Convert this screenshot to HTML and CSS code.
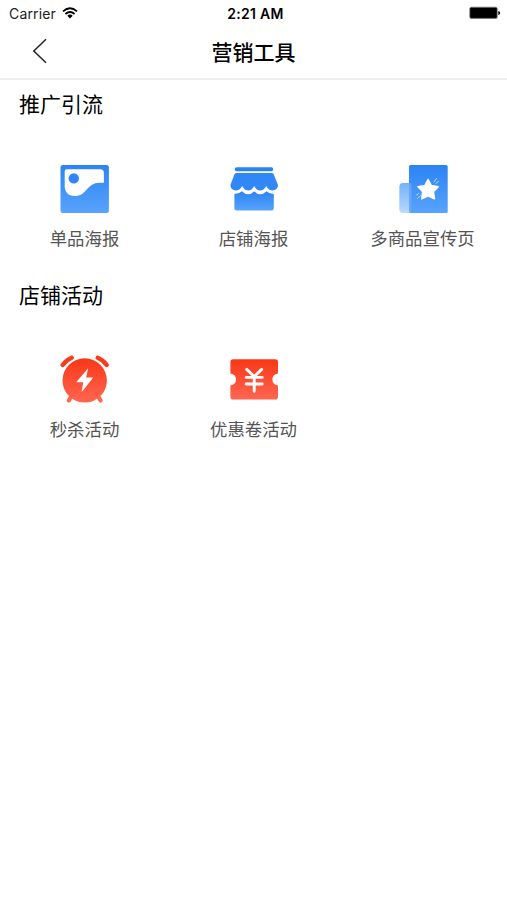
FILE: index.html
```
<!DOCTYPE html>
<html lang="zh-CN">
<head>
    <meta charset="UTF-8">
    <title>营销工具</title>
    <link rel="stylesheet" href="styles.css">
</head>
<body>

    <div class="status-bar">
        <div class="carrier">
            <span>Carrier</span>
            <svg class="wifi" width="16" height="12" viewBox="0 0 16 12">
                <g fill="none" stroke="#000" stroke-width="1.7">
                    <path d="M1 4.3Q8 -1.8 15 4.3"/>
                    <path d="M3.4 7Q8 3 12.6 7"/>
                </g>
                <path d="M5.3 8.7Q8 6.5 10.7 8.7L8 11.5Z"/>
            </svg>
        </div>
        <span class="time">2:21 AM</span>
        <svg class="battery" width="32" height="14" viewBox="0 0 32 14">
            <rect x="0.8" y="1.2" width="27.4" height="11.2" rx="1.5" fill="#000" stroke="#777" stroke-width="0.8"/>
            <path d="M29.3 5Q31.2 5.6 31.2 7T29.3 9Z"/>
        </svg>
    </div>

    <div class="nav-bar">
        <svg class="back" width="16" height="26" viewBox="0 0 16 26">
            <path d="M14 1.2L1.8 13L14 24.8" fill="none" stroke="#222" stroke-width="1.5"/>
        </svg>
        <h1>营销工具</h1>
    </div>

    <div class="section">
        <h2>推广引流</h2>
        <div class="grid">
            <div class="item">
                <svg width="50" height="50" viewBox="0.8 0 50 50">
                    <defs>
                        <linearGradient id="blue" x1="0" y1="0" x2="0" y2="1">
                            <stop offset="0" stop-color="#2b83f3"/>
                            <stop offset="1" stop-color="#58a3fc"/>
                        </linearGradient>
                    </defs>
                    <rect x="1.3" y="1" width="48.4" height="48" rx="2.5" fill="url(#blue)"/>
                    <path d="M7.5 5.3H41Q44.7 5.3 44.7 9V18.7C36 18.5 33 19.5 28.5 24.5C24 29.7 21 32 15.5 32C9 32 5.5 28 5.5 22V7.3Q5.5 5.3 7.5 5.3Z" fill="#fff"/>
                    <circle cx="14.6" cy="14.4" r="5.2" fill="#3087f4"/>
                </svg>
                <p>单品海报</p>
            </div>
            <div class="item">
                <svg width="50" height="50" viewBox="0.8 0 50 50">
                    <rect x="6.6" y="3.3" width="38.4" height="4" rx="1.8" fill="#2b83f3"/>
                    <path d="M8.5 9H43.3Q44.8 9 45.5 10.3L49.7 20.8C50 24.5 47 26.5 44.5 26.5Q40.5 26.5 38 22Q35.5 26.5 32 26.5Q28.5 26.5 26 22Q23.5 26.5 20 26.5Q16.5 26.5 14 22Q11.5 26.5 7.5 26.5C5 26.5 2 24.5 2.3 20.8L6.3 10.3Q7 9 8.5 9Z" fill="#3187f5"/>
                    <path d="M6.2 30Q10.8 30 13.8 27.3Q16.5 30.3 20 30.3Q23.5 30.3 26 27.3Q28.5 30.3 32 30.3Q35.5 30.3 38.2 27.3Q41 30 45.6 30V44.3Q45.6 46.5 43.4 46.5H8.4Q6.2 46.5 6.2 44.3Z" fill="url(#blue)"/>
                </svg>
                <p>店铺海报</p>
            </div>
            <div class="item">
                <svg width="50" height="50" viewBox="0.5 0 50 50">
                    <defs>
                        <linearGradient id="page" x1="0" y1="0" x2="0" y2="1">
                            <stop offset="0" stop-color="#75b1fa"/>
                            <stop offset="1" stop-color="#b8daff"/>
                        </linearGradient>
                    </defs>
                    <rect x="11.5" y="1" width="38.7" height="48" rx="1.5" fill="url(#blue)"/>
                    <path d="M5.5 19H11.5V49H5.5Q1.8 49 1.8 45V23Q1.8 19 5.5 19Z" fill="url(#page)"/>
                    <path d="M11.5 19Q14 19 14 22V44Q14 49 11.5 49Z" fill="#76b2fb" opacity="0.6"/>
                    <path d="M30.6 15.5L33.8 21.6L40.7 22.7L35.9 27.7L36.9 34.8L30.6 31.8L24.3 34.8L25.3 27.7L20.5 22.7L27.4 21.6Z" fill="#fff" stroke="#fff" stroke-width="1.6" stroke-linejoin="round"/>
                    <path d="M36.5 18L39 14.5M38.3 19.5L41 17.5M19 31L21.3 29.5M20 34.5L23 31.5" stroke="#b7d7ff" stroke-width="1" stroke-linecap="round"/>
                </svg>
                <p>多商品宣传页</p>
            </div>
        </div>
    </div>

    <div class="section">
        <h2>店铺活动</h2>
        <div class="grid">
            <div class="item">
                <svg width="50" height="50" viewBox="0.8 0.8 50 50">
                    <defs>
                        <linearGradient id="red" x1="0" y1="0" x2="0" y2="1">
                            <stop offset="0" stop-color="#f93717"/>
                            <stop offset="1" stop-color="#ff6651"/>
                        </linearGradient>
                    </defs>
                    <path d="M12.5 41.5L9.6 46.3M38.5 41.5L41.4 46.3" stroke="#ff6651" stroke-width="4.2" stroke-linecap="round"/>
                    <circle cx="25.5" cy="26.2" r="22.2" fill="url(#red)"/>
                    <path d="M3.5 10.8Q7 5.8 12.5 3.6M38.5 3.6Q44 5.8 47.5 10.8" fill="none" stroke="#f93a1b" stroke-width="4.3" stroke-linecap="round"/>
                    <path d="M28.9 14L17 28H24L22.4 38L34 23.3H27Z" fill="#fff"/>
                </svg>
                <p>秒杀活动</p>
            </div>
            <div class="item">
                <svg width="50" height="50" viewBox="0.8 0.4 50 50">
                    <path d="M5 4.6H47Q49.8 4.6 49.8 7.4V18.8Q44.2 20 44.2 24.8T49.8 30.8V42.2Q49.8 45 47 45H5Q2.2 45 2.2 42.2V30.8Q7.8 29.6 7.8 24.8T2.2 18.8V7.4Q2.2 4.6 5 4.6Z" fill="url(#red)"/>
                    <path d="M18.5 14.8L26 22L33.5 14.8M26 22V36.6M18 22.8H34M18 29.4H34" fill="none" stroke="#fff" stroke-width="2.9" stroke-linecap="round"/>
                </svg>
                <p>优惠卷活动</p>
            </div>
        </div>
    </div>

</body>
</html>
```
FILE: styles.css
```
body {
    margin: 0;
    background-color: #fff;
    color: #000;
    font-family: "Noto Sans CJK SC", sans-serif;
}

h1, h2, p {
    margin: 0;
}

svg {
    display: block;
}

.status-bar {
    display: grid;
    grid-template-columns: 1fr auto 1fr;
    align-items: center;
    height: 27px;
    padding: 0 6px 0 9px;
    font-family: Inter, sans-serif;
    font-size: 14px;
}

.carrier {
    display: flex;
    align-items: center;
    gap: 6px;
    color: #222;
    letter-spacing: 0.15px;
}

.wifi {
    margin-bottom: 2px;
}

.time {
    padding-left: 1px;
    font-weight: 600;
    letter-spacing: 0.3px;
}

.battery {
    justify-self: end;
    margin-bottom: 1px;
}

.nav-bar {
    display: grid;
    grid-template-columns: 1fr auto 1fr;
    align-items: center;
    height: 47px;
    padding: 0 32px 4px;
    border-bottom: 2px solid #f0f0f0;
}

.nav-bar h1 {
    font-size: 21px;
    line-height: 30px;
    font-weight: 500;
}

.section {
    height: 190.5px;
}

.section h2 {
    padding-left: 19px;
    font-size: 21px;
    line-height: 46px;
    font-weight: 400;
}

.grid {
    display: grid;
    grid-template-columns: repeat(3, 1fr);
    padding-top: 38px;
}

.item {
    display: flex;
    flex-direction: column;
    align-items: center;
    gap: 12px;
}

.item p {
    color: #555;
    font-size: 17.4px;
    line-height: 24px;
}
```
